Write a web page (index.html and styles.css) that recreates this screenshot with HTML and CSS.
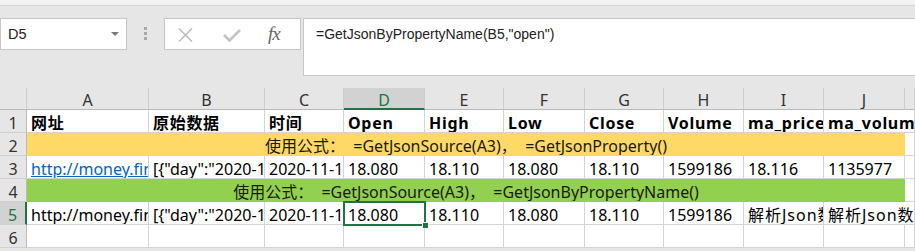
FILE: index.html
```html
<!DOCTYPE html>
<html lang="zh-CN">
<head>
  <meta charset="UTF-8" />
  <title>Book1 - Excel</title>
  <link rel="stylesheet" href="styles.css">
</head>
<body>

<div class="ribbon-edge"></div>

<!-- Barre de formule -->
<div class="formula-bar">
  <div class="name-box"><span>D5</span><span class="caret"></span></div>
  <div class="grip"><i></i><i></i><i></i></div>
  <div class="fx-box">
    <svg class="ico-x" width="15" height="14" viewBox="0 0 15 14">
      <path d="M1 0.5 L14 13.5 M14 0.5 L1 13.5" stroke="#bdbdbd" stroke-width="1.6" fill="none"/>
    </svg>
    <svg class="ico-ok" width="18" height="13" viewBox="0 0 18 13">
      <path d="M1 6 L6.5 11.5 L17 1" stroke="#c4c4c4" stroke-width="2.6" fill="none"/>
    </svg>
    <span class="fx">fx</span>
  </div>
  <div class="formula">=GetJsonByPropertyName(B5,"open")</div>
</div>

<!-- Feuille -->
<div class="sheet">
  <div class="c h corner">
    <svg width="27" height="21" viewBox="0 0 27 21"><polygon points="24,3 24,18 9,18" fill="#b9b9b9"/></svg>
  </div>
  <div class="c h">A</div>
  <div class="c h">B</div>
  <div class="c h">C</div>
  <div class="c h hsel">D</div>
  <div class="c h">E</div>
  <div class="c h">F</div>
  <div class="c h">G</div>
  <div class="c h">H</div>
  <div class="c h">I</div>
  <div class="c h">J</div>
  <div class="c h"></div>

  <div class="c r">1</div>
  <div class="c b">网址</div>
  <div class="c b">原始数据</div>
  <div class="c b">时间</div>
  <div class="c b">Open</div>
  <div class="c b">High</div>
  <div class="c b">Low</div>
  <div class="c b">Close</div>
  <div class="c b">Volume</div>
  <div class="c b">ma_price5</div>
  <div class="c b wide">ma_volume5</div>

  <div class="c r">2</div>
  <div class="c band yellow">使用公式：  =GetJsonSource(A3)，  =GetJsonProperty()</div>
  <div class="c"></div>

  <div class="c r">3</div>
  <div class="c"><span class="link">http://money.finance</span></div>
  <div class="c">[{"day":"2020-11</div>
  <div class="c">2020-11-13</div>
  <div class="c">18.080</div>
  <div class="c">18.110</div>
  <div class="c">18.080</div>
  <div class="c">18.110</div>
  <div class="c">1599186</div>
  <div class="c">18.116</div>
  <div class="c">1135977</div>
  <div class="c"></div>

  <div class="c r">4</div>
  <div class="c band green">使用公式：  =GetJsonSource(A3)，  =GetJsonByPropertyName()</div>
  <div class="c"></div>

  <div class="c r rsel">5</div>
  <div class="c">http://money.finance</div>
  <div class="c">[{"day":"2020-11</div>
  <div class="c">2020-11-13</div>
  <div class="c sel">18.080</div>
  <div class="c">18.110</div>
  <div class="c">18.080</div>
  <div class="c">18.110</div>
  <div class="c">1599186</div>
  <div class="c cjk">解析Json数据</div>
  <div class="c cjk wide">解析Json数据</div>

  <div class="c r">6</div>
  <div class="c"></div>
  <div class="c"></div>
  <div class="c"></div>
  <div class="c"></div>
  <div class="c"></div>
  <div class="c"></div>
  <div class="c"></div>
  <div class="c"></div>
  <div class="c"></div>
  <div class="c"></div>
  <div class="c"></div>
</div>

</body>
</html>
```

FILE: styles.css
```css
body {
  margin: 0;
  width: 915px;
  overflow: hidden;
  background: #e6e6e6;
  font-family: "Noto Sans", "Noto Sans CJK SC", sans-serif;
  color: #000;
}
.ribbon-edge {
  height: 5px;
  background: #f3f3f3;
  border-bottom: 1px solid #d5d5d5;
}

/* barre de formule */
.formula-bar {
  display: flex;
  align-items: flex-start;
  height: 82px;
  padding-top: 12px;
  box-sizing: border-box;
  font-family: "Liberation Sans", sans-serif;
}
.name-box {
  width: 127px;
  height: 32px;
  box-sizing: border-box;
  border: 1px solid #c6c6c6;
  background: #fff;
  display: flex;
  align-items: center;
  justify-content: space-between;
  padding: 0 7px;
  font-size: 14.5px;
  color: #222;
}
.caret {
  width: 0;
  height: 0;
  border-left: 4px solid transparent;
  border-right: 4px solid transparent;
  border-top: 4px solid #7a7a7a;
}
.grip {
  width: 37px;
  display: flex;
  flex-direction: column;
  align-items: center;
  gap: 2px;
  padding-top: 9px;
}
.grip i {
  width: 3px;
  height: 3px;
  background: #a8a8a8;
}
.fx-box {
  width: 137px;
  height: 32px;
  box-sizing: border-box;
  border: 1px solid #c6c6c6;
  background: #fff;
  display: flex;
  align-items: center;
  padding-left: 13px;
}
.ico-x {
  margin-top: 1px;
}
.ico-ok {
  margin-left: 30px;
  margin-top: 3px;
}
.fx {
  margin-left: 27px;
  font-family: "Liberation Serif", serif;
  font-style: italic;
  font-size: 19px;
  color: #666;
  letter-spacing: -1px;
}
.formula {
  flex: 1;
  margin-left: 2px;
  height: 58px;
  box-sizing: border-box;
  border: 1px solid #c6c6c6;
  border-right: none;
  background: #fff;
  padding: 7px 0 0 12px;
  font-size: 14px;
  line-height: 16px;
  color: #222;
}

/* grille */
.sheet {
  display: grid;
  grid-template-columns: 27px 122px 116px 79px 81px 79px 81px 79px 80px 80px 81px 1fr;
  grid-template-rows: 22px repeat(6, 23px);
  background: #fff;
}
.c {
  box-sizing: border-box;
  border-right: 1px solid #d4d4d4;
  border-bottom: 1px solid #d4d4d4;
  overflow: hidden;
  white-space: pre;
  font-size: 16px;
  line-height: 18px;
  padding: 4px 3px 0 4px;
}
.h {
  background: #e6e6e6;
  border-right-color: #cdcdcd;
  border-bottom-color: #bababa;
  text-align: center;
  color: #333;
  padding: 3px 0 0;
}
.corner {
  padding: 0;
}
.corner svg {
  display: block;
}
.hsel {
  background: #d2d2d2;
  color: #217346;
  border-bottom: 2px solid #217346;
}
.r {
  background: #e6e6e6;
  border-right-color: #bababa;
  border-bottom-color: #d0d0d0;
  text-align: center;
  color: #333;
  padding: 4px 0 0;
}
.rsel {
  background: #d2d2d2;
  color: #217346;
  border-right: 2px solid #217346;
}
.b {
  font-weight: bold;
  letter-spacing: 0.7px;
}
.cjk {
  letter-spacing: 1px;
}
.wide {
  grid-column: span 2;
}
.band {
  grid-column: 2 / 12;
  text-align: center;
  color: #1a1a1a;
}
.yellow {
  background: #ffd966;
  border-color: #ffd966;
}
.green {
  background: #92d050;
  border-color: #92d050;
}
.link {
  color: #0563c1;
  text-decoration: underline;
}
.sel {
  position: relative;
  overflow: visible;
  z-index: 1;
}
.sel::after {
  content: "";
  position: absolute;
  left: -1px;
  top: -1px;
  right: -2px;
  bottom: -2px;
  border: 2px solid #217346;
}
.sel::before {
  content: "";
  position: absolute;
  right: -5px;
  bottom: -5px;
  width: 5px;
  height: 5px;
  background: #217346;
  border: 1px solid #fff;
  z-index: 2;
}
```
